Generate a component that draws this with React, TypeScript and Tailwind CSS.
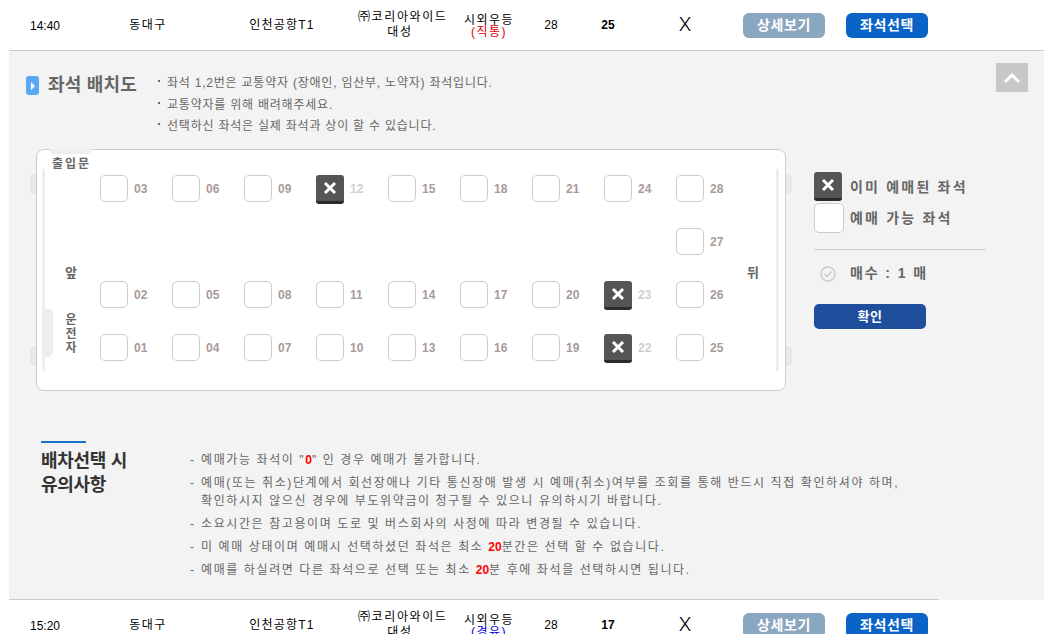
const font = '"Liberation Sans", "Noto Sans CJK KR", sans-serif';

function BusRow({ time, route, seats, sub }: { time: string; route: string; seats: string; sub: React.ReactNode }) {
  return (
    <div className="flex h-[50px] items-center text-[12px] text-black">
      <div className="w-[90px] pt-[1px] text-center">{time}</div>
      <div className="w-[116px] text-center tracking-[1.5px]">동대구</div>
      <div className="w-[152px] text-center tracking-[1.2px]">{route}</div>
      <div className="w-[84px] whitespace-nowrap text-center leading-[15px] tracking-[1.6px]">㈜코리아와이드<br />대성</div>
      <div className="w-[94px] pt-[2px] text-center leading-[12px] tracking-[1.5px]">시외우등<br />{sub}</div>
      <div className="w-[30px] text-center">28</div>
      <div className="w-[84px] text-center font-bold">{seats}</div>
      <div className="w-[70px] text-center font-['Inter'] text-[19px] font-light">X</div>
      <div className="ml-[23px] flex h-[25px] w-[82px] items-center justify-center rounded-[6px] bg-[#8ba7c0] text-[14px] font-bold tracking-[0.6px] text-white">상세보기</div>
      <div className="ml-[21px] flex h-[25px] w-[82px] items-center justify-center rounded-[6px] bg-[#0a64c8] text-[14px] font-bold tracking-[0.6px] text-white">좌석선택</div>
    </div>
  );
}

function XMark({ size = 14 }: { size?: number }) {
  return (
    <svg width={size} height={size} viewBox="0 0 14 14">
      <path d="M2 2 12 12M12 2 2 12" stroke="#fff" strokeWidth="3" />
    </svg>
  );
}

function Seat({ n, taken }: { n?: string; taken?: boolean }) {
  if (!n) return <div />;
  return (
    <div className="flex items-start gap-[6px]">
      {taken ? (
        <div className="flex h-[29px] w-[28px] items-center justify-center rounded-[3px] border-b-[3px] border-[#2b2b2b] bg-[#555555]">
          <XMark />
        </div>
      ) : (
        <div className="h-[27px] w-[28px] rounded-[5px] border border-[#cccccc] bg-white" />
      )}
      <span className={`pt-[1px] text-[12px] font-bold leading-[27px] ${taken ? 'text-[#cfcfcf]' : 'text-[#a89a9a]'}`}>{n}</span>
    </div>
  );
}

const rows: [string, boolean][][] = [
  [['03', false], ['06', false], ['09', false], ['12', true], ['15', false], ['18', false], ['21', false], ['24', false], ['28', false]],
  [['', false], ['', false], ['', false], ['', false], ['', false], ['', false], ['', false], ['', false], ['27', false]],
  [['02', false], ['05', false], ['08', false], ['11', false], ['14', false], ['17', false], ['20', false], ['23', true], ['26', false]],
  [['01', false], ['04', false], ['07', false], ['10', false], ['13', false], ['16', false], ['19', false], ['22', true], ['25', false]],
];

function Note({ children }: { children: React.ReactNode }) {
  return (
    <div className="flex whitespace-nowrap text-[12px] leading-[18px] tracking-[1.6px] text-[#666666]">
      <span className="w-[11px] shrink-0">-</span>
      <div>{children}</div>
    </div>
  );
}

function Red({ children }: { children: React.ReactNode }) {
  return <b className="tracking-normal text-[#ff0000]">{children}</b>;
}

function Bullet({ children }: { children: React.ReactNode }) {
  return (
    <div className="flex items-center">
      <span className="mb-[5px] mr-[7px] h-[2px] w-[2px] bg-[#666666]" />
      {children}
    </div>
  );
}

export default function App() {
  return (
    <div className="h-[634px] w-[1044px] overflow-hidden bg-white" style={{ fontFamily: font }}>
      <BusRow time="14:40" route="인천공항T1" seats="25" sub={<span className="text-[#e00000]">(직통)</span>} />
      <div className="relative ml-[9px] h-[550px] border-t border-[#cccccc] bg-[#f3f3f3]">
        <div className="absolute right-[16px] top-[12px] flex h-[29px] w-[32px] items-center justify-center bg-[#c8c8c8]">
          <svg width="18" height="12" viewBox="0 0 18 12"><path d="M2 10 9 3 16 10" fill="none" stroke="#fff" strokeWidth="3" /></svg>
        </div>

        <div className="flex pl-[17px] pt-[20px]">
          <div className="flex h-[27px] items-center pt-[2px]">
            <div className="flex h-[19px] w-[13px] items-center justify-center rounded-[3px] bg-[#5aa9f5]">
              <div className="h-0 w-0 border-y-[4px] border-l-[4px] border-y-transparent border-l-white" />
            </div>
            <div className="ml-[9px] text-[18px] font-bold tracking-[0.2px] text-[#666666]">좌석 배치도</div>
          </div>
          <div className="ml-[21px] flex flex-col pt-[2px] text-[12px] leading-[21.5px] tracking-[0.78px] text-[#666666]">
            <Bullet>좌석 1,2번은 교통약자 (장애인, 임산부, 노약자) 좌석입니다.</Bullet>
            <Bullet>교통약자를 위해 배려해주세요.</Bullet>
            <Bullet>선택하신 좌석은 실제 좌석과 상이 할 수 있습니다.</Bullet>
          </div>
        </div>

        <div className="mt-[11.5px] flex pl-[27px]">
          <div className="relative h-[242px] w-[750px] rounded-[8px] border border-[#cccccc] bg-white">
            <div className="absolute -left-[7px] top-[24px] h-[20px] w-[6px] rounded-l-[5px] bg-[#e8e8e8]" />
            <div className="absolute -left-[7px] top-[196px] h-[20px] w-[6px] rounded-l-[5px] bg-[#e8e8e8]" />
            <div className="absolute -right-[7px] top-[24px] h-[20px] w-[6px] rounded-r-[5px] bg-[#e8e8e8]" />
            <div className="absolute -right-[7px] top-[196px] h-[20px] w-[6px] rounded-r-[5px] bg-[#e8e8e8]" />
            <div className="absolute left-[12px] top-[-1px] h-[5px] w-[43px] rounded-b-[6px] bg-[#eeeeee]" />
            <div className="absolute left-[5px] top-[19px] h-[202px] w-[3px] bg-[#eeeeee]" />
            <div className="absolute left-[8px] top-[159px] h-[48px] w-[8px] rounded-r-[5px] bg-[#eeeeee]" />
            <div className="absolute right-[6px] top-[19px] h-[202px] w-[3px] bg-[#eeeeee]" />
            <div className="absolute left-[15px] top-[5px] text-[12px] font-bold tracking-[2px] text-[#666666]">출입문</div>
            <div className="absolute left-[28px] top-[113px] text-[13px] font-bold text-[#666666]">앞</div>
            <div className="absolute left-[27px] top-[163px] w-[14px] text-center text-[12px] font-bold leading-[14px] text-[#666666]">운<br />전<br />자</div>
            <div className="absolute left-[710px] top-[113px] text-[13px] font-bold text-[#666666]">뒤</div>

            <div className="grid grid-cols-[repeat(9,72px)] grid-rows-[repeat(4,53px)] pl-[63px] pt-[25px]">
              {rows.flat().map(([n, t], i) => (
                <Seat key={i} n={n} taken={t} />
              ))}
            </div>
          </div>

          <div className="ml-[28px] flex w-[172px] flex-col pt-[23px]">
            <div className="flex items-center gap-[8px]">
              <div className="flex h-[29px] w-[28px] items-center justify-center rounded-[3px] border-b-[3px] border-[#2b2b2b] bg-[#555555]"><XMark /></div>
              <span className="pt-[1px] text-[14px] font-bold tracking-[2.2px] text-[#666666]">이미 예매된 좌석</span>
            </div>
            <div className="mt-[2px] flex items-center gap-[6px]">
              <div className="h-[30px] w-[30px] rounded-[5px] border border-[#cccccc] bg-white" />
              <span className="text-[14px] font-bold tracking-[2.2px] text-[#666666]">예매 가능 좌석</span>
            </div>
            <div className="mt-[16px] border-t border-[#cccccc]" />
            <div className="mt-[13px] flex items-center pl-[6px]">
              <svg width="16" height="16" viewBox="0 0 16 16"><circle cx="8" cy="8" r="7" fill="none" stroke="#cccccc" strokeWidth="1.5" /><path d="M4.5 8 7 10.5 11.5 5.5" fill="none" stroke="#cccccc" strokeWidth="1.5" /></svg>
              <span className="ml-[14px] text-[14px] font-bold tracking-[1.9px] text-[#666666]">매수 : 1 매</span>
            </div>
            <div className="mt-[20px] flex h-[25px] w-[112px] items-center justify-center rounded-[5px] bg-[#1f4f9c] text-[13px] font-bold tracking-[0.5px] text-white">확인</div>
          </div>
        </div>

        <div className="mt-[50px] flex pl-[32px]">
          <div className="w-[149px]">
            <div className="h-[2px] w-[45px] bg-[#1a73c8]" />
            <div className="mt-[6px] text-[18px] font-bold leading-[24px] tracking-[-0.3px] text-[#333333]">배차선택 시<br />유의사항</div>
          </div>
          <div className="flex flex-col gap-[5px] pt-[10px]">
            <Note>예매가능 좌석이 "<Red>0</Red>" 인 경우 예매가 불가합니다.</Note>
            <Note>예매(또는 취소)단계에서 회선장애나 기타 통신장애 발생 시 예매(취소)여부를 조회를 통해 반드시 직접 확인하셔야 하며,<br />확인하시지 않으신 경우에 부도위약금이 청구될 수 있으니 유의하시기 바랍니다.</Note>
            <Note>소요시간은 참고용이며 도로 및 버스회사의 사정에 따라 변경될 수 있습니다.</Note>
            <Note>미 예매 상태이며 예매시 선택하셨던 좌석은 최소 <Red>20</Red>분간은 선택 할 수 없습니다.</Note>
            <Note>예매를 하실려면 다른 좌석으로 선택 또는 최소 <Red>20</Red>분 후에 좌석을 선택하시면 됩니다.</Note>
          </div>
        </div>
      </div>
      <div className="relative">
        <div className="absolute left-[9px] top-[-1px] h-px w-[930px] bg-[#cccccc]" />
        <BusRow time="15:20" route="인천공항T1" seats="17" sub={<span className="text-[#0000e0]">(경유)</span>} />
      </div>
    </div>
  );
}
